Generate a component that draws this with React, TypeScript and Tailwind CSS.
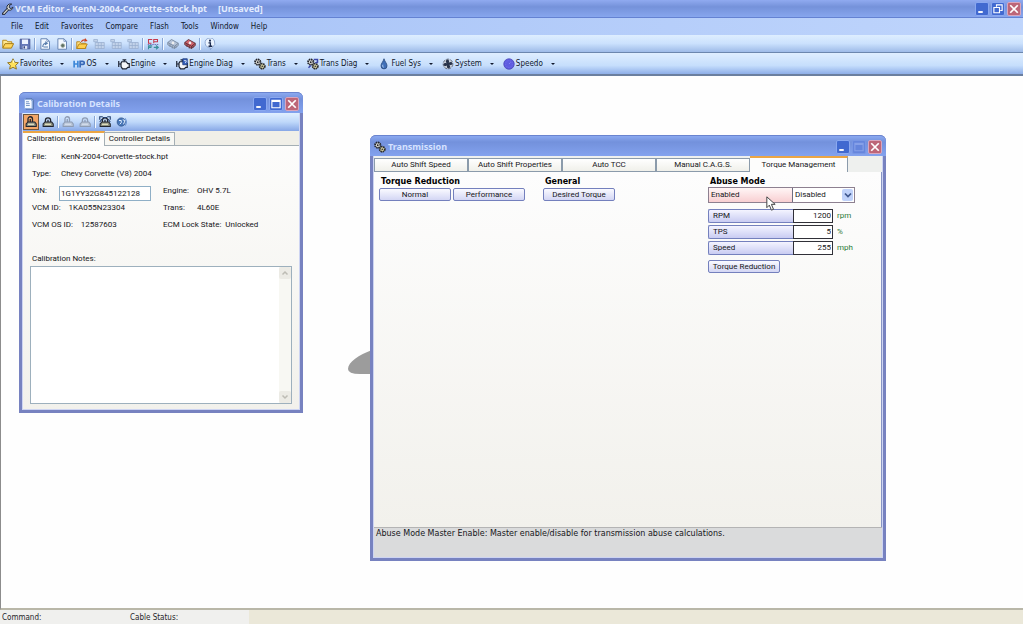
import React from "react";
import clsx from "clsx";

const UI = "font-['DejaVu_Sans_Condensed','DejaVu_Sans',sans-serif]";
const FORM = "font-['Roboto','Liberation_Sans',Arial,sans-serif]";
const WIDE = "font-['DejaVu_Sans',sans-serif]";
const TITLE = "font-['Noto_Sans',sans-serif]";

type IconProps = { children: React.ReactNode; className?: string };

function Icon({ children, className = "size-3" }: IconProps) {
  return (
    <svg viewBox="0 0 16 16" className={clsx("shrink-0", className)} fill="none" aria-hidden="true">
      {children}
    </svg>
  );
}

const WrenchIcon = () => (
  <Icon className="size-3">
    <path d="M2 14.5 8 8" stroke="#222838" strokeWidth="4" strokeLinecap="round" />
    <path d="M2.5 14 9 7" stroke="#d8d8d0" strokeWidth="1.6" strokeLinecap="round" />
    <path d="M8 2.5a4 4 0 1 0 6.5 3L12 7.5 9.5 6 10 3l3-1.5a5 5 0 0 0-5 1Z" fill="#e4e4df" stroke="#222838" strokeWidth="1.3" />
  </Icon>
);

const FolderIcon = () => (
  <Icon>
    <path d="M1 13V3h5l1.5 2H13v3" fill="#ffe992" stroke="#b98b1d" strokeWidth="1.3" />
    <path d="M1 13.5 4 7.5h11.5l-3 6Z" fill="#ffd75e" stroke="#a87c14" strokeWidth="1.3" />
  </Icon>
);

const SaveIcon = () => (
  <Icon>
    <path d="M1.5 1.5h13v13h-13Z" fill="#6678b8" stroke="#3f4e8a" />
    <path d="M4 2h8v6H4Z" fill="#eef3ff" />
    <path d="M5 10.5h6v4H5Z" fill="#dfe5f5" />
    <path d="M6 11h2v3H6Z" fill="#39457d" />
  </Icon>
);

const PageIcon = ({ mark }: { mark: "arrow" | "gear" }) => (
  <Icon>
    <path d="M2.5 1h8L14 4.500V15H2.500Z" fill="#f3f8ff" stroke="#6886b4" strokeWidth="1.3" />
    <path d="M10.500 1v3.500H14" stroke="#6886b4" />
    {mark === "arrow" ? (
      <path d="M5 12c0-3 1-5 5-5M8 5l3 2-3 2M6 12h6" stroke="#5b7fae" strokeWidth="1.500" />
    ) : (
      <circle cx="9" cy="10" r="2.500" fill="#5f6f63" stroke="#a6b1a2" />
    )}
  </Icon>
);

const OpenGoIcon = () => (
  <Icon>
    <path d="M1 14V5h4l2 2h6v7Z" fill="#ffe083" stroke="#b5811a" strokeWidth="1.2" />
    <path d="m1 14 3-6h11l-3 6Z" fill="#ffcf4c" stroke="#b5811a" strokeWidth="1.2" />
    <path d="M7 5c2-3 4-3 6-2" stroke="#cc4324" strokeWidth="1.6" />
    <path d="m12 0 3.500 4-4.500 1Z" fill="#cc4324" />
  </Icon>
);

const GridIcon = () => (
  <Icon>
    <path d="M1 2h5v3H1ZM3 6h12v8H3Z" fill="#c3d3ea" stroke="#98aecf" />
    <path d="M3 10h12M7 6v8M11 6v8" stroke="#98aecf" />
  </Icon>
);

const CompareIcon = () => (
  <Icon>
    <path d="M7 2H2v5h4M9 7V2h5v3H9" stroke="#c63a4d" strokeWidth="1.400" />
    <path d="M2 15v-4.500h5M2 12.500h4M9 12.500h6M12 10l3 2.500-3 2.500" stroke="#3a8f9a" strokeWidth="1.400" />
    <path d="M1 8.700h14" stroke="#5a55a8" strokeDasharray="2 1" />
  </Icon>
);

const ChipIcon = ({ body, edge }: { body: string; edge: string }) => (
  <Icon>
    <path d="m1 6 5-4 9 5v3l-5 4-9-5Z" fill={body} stroke={edge} strokeWidth="1.2" />
    <path d="m1 6 9 5 5-4M10 11v3M4 8v4M7 10v4M12 10v3" stroke={edge} strokeWidth="1.2" />
    <circle cx="8" cy="6.500" r="1.800" fill="#eee" />
  </Icon>
);

const InfoIcon = () => (
  <Icon>
    <path d="M1.500 7a6.500 6.500 0 1 1 10 5l-3 3.500v-2.500A6.500 6.500 0 0 1 1.500 7Z" fill="#eaf3ff" stroke="#7896c6" />
    <circle cx="8" cy="3.500" r="1.400" fill="#1c2c50" />
    <path d="M6 6.500h2.500V11M6 11h5" stroke="#1c2c50" strokeWidth="1.800" />
  </Icon>
);

const StarIcon = () => (
  <Icon>
    <path d="m8 1 2.200 4.700 5 .6-3.700 3.500 1 5L8 12.400l-4.500 2.400 1-5L.8 6.300l5-.6Z" fill="#ffe15a" stroke="#8d6f1a" strokeWidth="1.200" />
    <path d="m8 3 1.200 3.500" stroke="#fffbd0" strokeWidth="1.500" />
  </Icon>
);

const HpIcon = () => (
  <Icon>
    <path d="M1.500 3.500v9M1.500 8h5M6.500 3.500v9" stroke="#3b86d8" strokeWidth="2.200" />
    <path d="M9.500 12.500V4.500H13q2 0 2 2T13 8.500H9.500" stroke="#3769b8" strokeWidth="2.200" />
  </Icon>
);

const EngineIcon = ({ diag = false }: { diag?: boolean }) => (
  <Icon>
    <path d="M1 4v8M1 8h3M5 5h6l2 2.500h2v5h-2l-2 2H6l-2-3V7Z" fill="#f5f7fa" stroke="#1b2230" strokeWidth="1.600" />
    <path d="M6 2.500h5M8.500 2.500v2" stroke="#1b2230" strokeWidth="1.500" />
    {diag && <path d="M9 1h6v8H9Z" fill="#3562bd" stroke="#1b3875" />}
    {diag && <path d="M10.500 3.500h3v2l-1.500 1" stroke="#fff" />}
  </Icon>
);

const GearsIcon = ({ diag = false }: { diag?: boolean }) => (
  <Icon>
    <circle cx="5" cy="5.500" r="3.600" fill="#e2e2dc" stroke="#23252b" strokeWidth="2.400" strokeDasharray="2 .8" />
    <circle cx="5" cy="5.500" r="1.200" fill="#23252b" />
    <circle cx="11" cy="11" r="3.400" fill="#d8d4a8" stroke="#2d2e2c" strokeWidth="2.400" strokeDasharray="2 .8" />
    <circle cx="11" cy="11" r="1.100" fill="#2d2e2c" />
    {diag && <path d="M9 2h5v3.500l-3 1M2 13l3-3" stroke="#3b46a8" strokeWidth="2" />}
  </Icon>
);

const DropIcon = () => (
  <Icon>
    <path d="M8 1c1 4 4 6 4 9.500a4 4 0 0 1-8 0C4 7 7 5 8 1Z" fill="#3f6fb8" stroke="#244577" />
    <path d="M6.500 9c-.6 1.800 0 3 1 3.500" stroke="#bcd7f8" strokeWidth="1.300" />
  </Icon>
);

const FanIcon = () => (
  <Icon>
    <circle cx="8" cy="8" r="6.500" fill="#c7ced8" stroke="#434e62" strokeDasharray="4 1.500" />
    <path d="M8 8C5 7 4 3 7 2c3 0 3 4 1 6Zm0 0c1-3 5-4 6-1 0 3-4 3-6 1Zm0 0c3 1 4 5 1 6-3 0-3-4-1-6Zm0 0c-1 3-5 4-6 1 0-3 4-3 6-1Z" fill="#28344c" />
  </Icon>
);

const GaugeIcon = () => (
  <Icon>
    <circle cx="8" cy="8" r="7" fill="#5f5ce0" stroke="#4a46b8" />
    <circle cx="8" cy="8" r="4.500" stroke="#7d7cf0" strokeDasharray="1 1.500" />
    <path d="m8 8 2-2" stroke="#8f90f4" />
  </Icon>
);

const ReadIcon = ({ muted = false, open = false, framed = false }: { muted?: boolean; open?: boolean; framed?: boolean }) => (
  <Icon>
    <path
      d={open ? "M4 8V4a3 3 0 0 1 6 0v4M7 4v4" : "M4.500 8V6a3.500 3.500 0 0 1 7 0v2M8 5v3"}
      stroke={muted ? "#8e9cb3" : "#20242e"}
      strokeWidth="1.700"
    />
    <path d="M1.500 10.500 4 8h9l2 2.500V14H1.500Z" fill={muted ? "#b8c5d8" : "#8b8f80"} stroke={muted ? "#8e9cb3" : "#20242e"} strokeWidth="1.400" />
    <path d="M4 11h8" stroke={muted ? "#d8e1ee" : "#f0eecb"} strokeWidth="1.500" />
    {framed && <path d="M1 5V1h4M11 1h4v4M1 8l3-4M15 8l-3-4M5 2h6" stroke="#23406f" strokeWidth="1.500" />}
  </Icon>
);

const HelpIcon = () => (
  <Icon>
    <circle cx="7" cy="8" r="5.500" fill="#4877b8" stroke="#2d5288" />
    <path d="M4 6h3v3L5 11M9 5l3 1-2 5" stroke="#e3f0ff" strokeWidth="1.300" />
    <path d="M12 3q4 5 0 10" stroke="#6f98d5" strokeWidth="1.500" />
  </Icon>
);

const DocIcon = () => (
  <Icon>
    <path d="M4 1h8l2 2v12H4Z" fill="#8faeda" stroke="#4b6ba8" />
    <path d="M2 2h8l2 2v10H2Z" fill="#f4f9ff" stroke="#86a5db" />
    <path d="M4 5h4M4 7.500h5M4 10h5" stroke="#5479b5" />
  </Icon>
);

function CaptionButton({ kind, faded = false }: { kind: "min" | "max" | "restore" | "close"; faded?: boolean }) {
  return (
    <button
      type="button"
      aria-label={kind}
      className={clsx(
        "flex size-[14px] items-center justify-center rounded-xs border",
        kind === "close" ? "border-[#d9a5bd] bg-[#bd6678]" : faded ? "border-[#7896e4] bg-[#6585dc]" : "border-[#8aa8f0] bg-[#4169d0]",
      )}
    >
      <Icon className="size-3">
        {kind === "min" && <path d="M3 12h6" stroke="#fff" strokeWidth="2.500" />}
        {kind === "max" && <path d="M2.500 3h11v10h-11ZM2.500 4.500h11" stroke={faded ? "#86a0e8" : "#fff"} strokeWidth="1.500" />}
        {kind === "restore" && <path d="M6 5V2.500h7.500V10H11M2.500 6H10v7H2.500Z" stroke="#fff" strokeWidth="1.500" />}
        {kind === "close" && <path d="m3 3 10 10M13 3 3 13" stroke="#fff" strokeWidth="2.300" />}
      </Icon>
    </button>
  );
}

function ToolButton({ label, children, className }: { label: string; children: React.ReactNode; className?: string }) {
  return (
    <button type="button" aria-label={label} className={clsx("flex size-4 items-center justify-center", className)}>
      {children}
    </button>
  );
}

const Separator = () => <span className="h-3 w-0.5 border-r border-r-[#f4f9ff] bg-[#88a6d4]" />;

const menus = ["File", "Edit", "Favorites", "Compare", "Flash", "Tools", "Window", "Help"];

const shortcuts = [
  { label: "Favorites", icon: <StarIcon /> },
  { label: "OS", icon: <HpIcon /> },
  { label: "Engine", icon: <EngineIcon /> },
  { label: "Engine Diag", icon: <EngineIcon diag /> },
  { label: "Trans", icon: <GearsIcon /> },
  { label: "Trans Diag", icon: <GearsIcon diag /> },
  { label: "Fuel Sys", icon: <DropIcon /> },
  { label: "System", icon: <FanIcon /> },
  { label: "Speedo", icon: <GaugeIcon /> },
];

function AppHeader() {
  return (
    <header className={clsx(UI, "text-[8px] leading-3 text-[#10182c]")}>
      <div className="flex h-[18px] items-center justify-between border-b border-[#6482d2] bg-linear-to-b from-[#90aaf0] via-[#7592da] via-40% to-[#87a6ee] pr-0.5 pl-0.5">
        <h1 className={clsx(TITLE, "flex items-center gap-px text-[9px] font-bold text-[#e3ecff]")}>
          <WrenchIcon />
          <span>VCM Editor - KenN-2004-Corvette-stock.hpt</span>
          <span className="ml-2.5">[Unsaved]</span>
        </h1>
        <div className="flex gap-0.5">
          <CaptionButton kind="min" />
          <CaptionButton kind="restore" />
          <CaptionButton kind="close" />
        </div>
      </div>
      <nav className="flex h-[17px] items-center gap-3 bg-linear-to-r from-[#a5c1f6] to-[#bfd5fc] pt-px pl-[11px]">
        {menus.map((m) => (
          <button key={m} type="button">
            {m}
          </button>
        ))}
      </nav>
      <div className="flex h-[18px] items-center gap-px border-b border-[#6c87ae] bg-linear-to-b from-[#deeeff] via-[#cbe1fd] via-50% to-[#9ebbe8]">
        <ToolButton label="Open"><FolderIcon /></ToolButton>
        <ToolButton label="Save"><SaveIcon /></ToolButton>
        <Separator />
        <ToolButton label="Revert file"><PageIcon mark="arrow" /></ToolButton>
        <ToolButton label="File properties"><PageIcon mark="gear" /></ToolButton>
        <Separator />
        <ToolButton label="Open comparison"><OpenGoIcon /></ToolButton>
        <ToolButton label="Previous difference"><GridIcon /></ToolButton>
        <ToolButton label="Next difference"><GridIcon /></ToolButton>
        <ToolButton label="Copy difference"><GridIcon /></ToolButton>
        <Separator />
        <ToolButton label="Show differences"><CompareIcon /></ToolButton>
        <Separator />
        <ToolButton label="Read vehicle"><ChipIcon body="#b5c3d8" edge="#78899f" /></ToolButton>
        <ToolButton label="Write vehicle"><ChipIcon body="#d0626a" edge="#5e3038" /></ToolButton>
        <Separator />
        <ToolButton label="Information"><InfoIcon /></ToolButton>
      </div>
      <div className="flex h-[23px] items-center gap-[9px] border-b-2 border-[#6b7f9f] bg-linear-to-b from-[#dfeeff] via-[#c6defc] via-60% to-[#8eaee8] pt-px pl-[7px]">
        {shortcuts.map((s) => (
          <button key={s.label} type="button" className="flex items-center gap-px">
            {s.icon}
            <span>{s.label}</span>
            <span className="ml-[7px] border-x-2 border-t-2 border-x-transparent border-t-[#10182c]" />
          </button>
        ))}
      </div>
    </header>
  );
}

type WindowProps = {
  title: string;
  icon: React.ReactNode;
  className: string;
  maxFaded?: boolean;
  children: React.ReactNode;
};

function ChildWindow({ title, icon, className, maxFaded, children }: WindowProps) {
  return (
    <section
      aria-label={title}
      className={clsx("absolute flex flex-col rounded-t-md border-x-3 border-b-3 border-[#7782c0] bg-[#7290dc] text-[8px] leading-[10px] text-[#16161a]", FORM, className)}
    >
      <div className="-mx-[3px] flex h-[21px] shrink-0 items-center justify-between rounded-t-md border-t border-[#6a84cf] bg-linear-to-b from-[#8ba9f0] via-[#7391dc] via-30% to-[#83a2ee] pt-0.5 pr-1 pl-1">
        <h2 className={clsx(TITLE, "flex items-center gap-0.5 text-[9px] font-bold text-[#d5e2ff]")}>
          {icon}
          {title}
        </h2>
        <div className="flex gap-0.5">
          <CaptionButton kind="min" />
          <CaptionButton kind="max" faded={maxFaded} />
          <CaptionButton kind="close" />
        </div>
      </div>
      <div className="flex grow flex-col border-x border-b border-[#cdd4f2]">{children}</div>
    </section>
  );
}

function Detail({ label, value }: { label: string; value: string }) {
  return (
    <div className="flex gap-2">
      <dt>{label}</dt>
      <dd>{value}</dd>
    </div>
  );
}

function ScrollArrow({ up = false }: { up?: boolean }) {
  return (
    <span className="flex size-3 items-center justify-center rounded-xs bg-[#ecebe5]">
      <Icon className="size-2">
        <path d={up ? "m3 11 5-5 5 5" : "m3 5 5 5 5-5"} stroke="#bdbcb4" strokeWidth="3" />
      </Icon>
    </span>
  );
}

function CalibrationDetails() {
  return (
    <ChildWindow title="Calibration Details" icon={<DocIcon />} className="top-[16px] left-[18px] h-[321px] w-[284px]">
      <div className="flex h-[18px] shrink-0 items-center gap-px bg-linear-to-b from-[#e0efff] via-[#bfd8fa] via-50% to-[#87a7e6]">
        <ToolButton label="Unlock read" className="border border-[#6c5540] bg-[#f3a667]"><ReadIcon open /></ToolButton>
        <ToolButton label="Lock read"><ReadIcon /></ToolButton>
        <Separator />
        <ToolButton label="Unlock write"><ReadIcon open muted /></ToolButton>
        <ToolButton label="Lock write"><ReadIcon muted /></ToolButton>
        <Separator />
        <ToolButton label="Edit details"><ReadIcon framed /></ToolButton>
        <ToolButton label="Help"><HelpIcon /></ToolButton>
      </div>
      <div className="flex grow flex-col bg-linear-to-b from-[#fdfdfc] to-[#f2f1ec]">
        <div role="tablist" className="flex h-[15px] shrink-0 items-end border-b border-[#a4afb5] bg-[#f0efe8]">
          <button type="button" role="tab" aria-selected="true" className="-mb-px h-[15px] border-t-2 border-r border-t-[#eba544] border-r-[#a4afb5] bg-[#fdfdfc] px-1 pb-0.5">
            Calibration Overview
          </button>
          <button type="button" role="tab" aria-selected="false" className="h-[13px] border-t border-r border-[#a4afb5] bg-[#f8f8f4] px-1">
            Controller Details
          </button>
        </div>
        <dl className="flex flex-col gap-[7px] pt-[6px] pl-[9px]">
          <div className="grid grid-cols-[29px_1fr]">
            <dt>File:</dt>
            <dd>KenN-2004-Corvette-stock.hpt</dd>
          </div>
          <div className="grid grid-cols-[29px_1fr]">
            <dt>Type:</dt>
            <dd>Chevy Corvette (V8) 2004</dd>
          </div>
          <div className="grid h-[10px] grid-cols-[131px_1fr] items-start">
            <div className="flex items-start">
              <dt className="w-[27px]"><label htmlFor="vin">VIN:</label></dt>
              <dd className="flex">
                <input id="vin" defaultValue="1G1YY32G845122128" className="h-[15px] w-[92px] border border-[#8fafc6] bg-white px-px" />
              </dd>
            </div>
            <Detail label="Engine:" value="OHV 5.7L" />
          </div>
          <div className="grid grid-cols-[131px_1fr]">
            <Detail label="VCM ID:" value="1KA055N23304" />
            <div className="grid grid-cols-[34px_1fr]">
              <dt>Trans:</dt>
              <dd>4L60E</dd>
            </div>
          </div>
          <div className="grid grid-cols-[131px_1fr]">
            <Detail label="VCM OS ID:" value="12587603" />
            <div className="flex gap-1">
              <dt>ECM Lock State:</dt>
              <dd>Unlocked</dd>
            </div>
          </div>
        </dl>
        <label htmlFor="notes" className="mt-6 pl-[9px]">Calibration Notes:</label>
        <div className="mx-[7px] mt-0.5 mb-[5px] flex grow border border-[#9db0bd] bg-white">
          <textarea id="notes" className="grow resize-none" />
          <div className="flex w-3 flex-col justify-between bg-[#f8f8f3]">
            <ScrollArrow up />
            <ScrollArrow />
          </div>
        </div>
      </div>
    </ChildWindow>
  );
}

const transTabs = ["Auto Shift Speed", "Auto Shift Properties", "Auto TCC", "Manual C.A.G.S."];

function PanelButton({ children }: { children: React.ReactNode }) {
  return (
    <button type="button" className="h-[13px] w-[72px] rounded-xs border border-[#7480bd] bg-linear-to-b from-[#fafaff] to-[#d3d6f4] leading-[11px] whitespace-nowrap">
      {children}
    </button>
  );
}

const limits = [
  { id: "rpm", label: "RPM", value: "1200", unit: "rpm" },
  { id: "tps", label: "TPS", value: "5", unit: "%" },
  { id: "speed", label: "Speed", value: "255", unit: "mph" },
];

function Transmission() {
  const heading = clsx(WIDE, "pl-0.5 text-[8px] leading-[10px] font-bold text-black");
  return (
    <ChildWindow title="Transmission" icon={<GearsIcon />} maxFaded className="top-[59px] left-[369px] h-[426px] w-[516px]">
      <div role="tablist" className="flex h-4 shrink-0 items-end bg-[#eef0ee]">
        {transTabs.map((t) => (
          <button key={t} type="button" role="tab" aria-selected="false" className="h-[14px] w-[94px] border border-[#8b9bab] bg-linear-to-b from-white to-[#f0f0ea]">
            {t}
          </button>
        ))}
        <button type="button" role="tab" aria-selected="true" className="h-4 w-[98px] border-t-2 border-r border-t-[#eba544] border-r-[#8b9bab] bg-[#fdfdfc] pb-px">
          Torque Management
        </button>
      </div>
      <div className="flex grow border-r border-[#8794c4] bg-linear-to-b from-[#fdfdfd] to-[#f2f1ec] pt-[5px] pl-[5px]">
        <div className="grid grow grid-cols-[164px_165px_1fr] content-start items-start">
          <div className="flex flex-col gap-px">
            <h3 className={heading}>Torque Reduction</h3>
            <div className="flex gap-0.5">
              <PanelButton>Normal</PanelButton>
              <PanelButton>Performance</PanelButton>
            </div>
          </div>
          <div className="flex flex-col gap-px">
            <h3 className={heading}>General</h3>
            <PanelButton>Desired Torque</PanelButton>
          </div>
          <div className="flex flex-col">
            <h3 className={heading}>Abuse Mode</h3>
            <div className="flex h-4 w-[147px] border border-[#8d8090] bg-white">
              <label htmlFor="abuse" className="flex w-[84px] items-center border-r border-[#6e6e80] bg-linear-to-b from-[#fff6f6] to-[#f8cfd2] pl-0.5">
                Enabled
              </label>
              <div className="relative flex grow">
                <select id="abuse" defaultValue="Disabled" className="grow appearance-none pl-0.5">
                  <option>Disabled</option>
                  <option>Enabled</option>
                </select>
                <span className="pointer-events-none absolute top-px right-px flex h-3 w-[11px] items-center justify-center rounded-xs bg-[#c0d2fa]">
                  <Icon className="size-2">
                    <path d="m2 5 6 6 6-6" stroke="#40588f" strokeWidth="3.500" />
                  </Icon>
                </span>
              </div>
            </div>
            <div className="mt-[6px] mb-1 flex flex-col gap-0.5">
              {limits.map((l) => (
                <div key={l.id} className="flex h-[14px] items-center">
                  <label htmlFor={l.id} className="flex h-[14px] w-[85px] items-center rounded-l-xs border border-r-0 border-[#7480bd] bg-linear-to-b from-[#f4f4ff] to-[#c9ccf2] pl-1">
                    {l.label}
                  </label>
                  <input id={l.id} defaultValue={l.value} className="h-[14px] w-[40px] border border-[#303038] bg-white pr-px pb-px text-right" />
                  <span className="pl-1 text-[#2b7a38]">{l.unit}</span>
                </div>
              ))}
            </div>
            <div className="pt-px">
              <PanelButton>Torque Reduction</PanelButton>
            </div>
          </div>
        </div>
      </div>
      <p className={clsx(WIDE, "h-[30px] shrink-0 border-t border-[#b4b4b4] bg-[#dadbdc] pt-px pl-0.5 text-[8px] leading-[10px]")}>
        Abuse Mode Master Enable: Master enable/disable for transmission abuse calculations.
      </p>
      <svg viewBox="0 0 12 18" className="absolute top-[61px] left-[393px] h-[15px] w-[10px]" aria-hidden="true">
        <path d="M1 1v13l3-3 2.500 6 2.500-1-2.500-6H11Z" fill="#fff" stroke="#444" strokeWidth="1.200" />
      </svg>
    </ChildWindow>
  );
}

export default function App() {
  return (
    <div className="flex min-h-screen flex-col bg-[#ebe8d9]">
      <AppHeader />
      <main className="relative min-h-[500px] grow border-b-2 border-l border-b-[#b9b7a8] border-l-[#8c8c8c] bg-[#fefefe]">
        <svg viewBox="0 0 60 26" className="absolute top-[273px] left-[346px] h-[26px] w-[60px]" aria-hidden="true">
          <path d="M25 1C12 6 1 13 1 20q0 5 12 5h14v-7c-4-3-3-9 0-11Z" fill="#9c9c9c" />
        </svg>
        <CalibrationDetails />
        <Transmission />
      </main>
      <footer className={clsx(UI, "flex h-[14px] items-center text-[8px] leading-[10px] text-[#26262a]")}>
        <span className="h-full w-32 bg-[#f0f0ee] pt-[3px] pl-0.5">Command:</span>
        <span className="h-full w-[121px] bg-[#f0f0ee] pt-[3px] pl-0.5">Cable Status:</span>
      </footer>
    </div>
  );
}
